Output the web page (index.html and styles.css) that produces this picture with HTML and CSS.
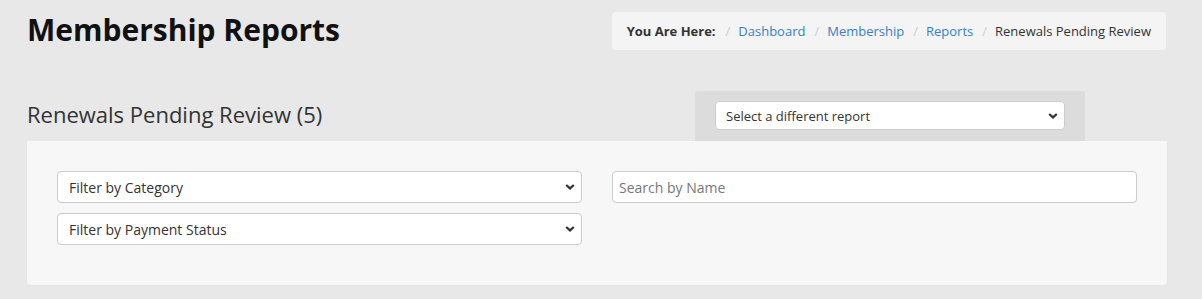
FILE: index.html
```html
<!DOCTYPE html>
<html lang="en">
<head>
    <meta charset="UTF-8">
    <meta name="viewport" content="width=device-width, initial-scale=1.0">
    <title>Membership Reports</title>
    <link rel="stylesheet" href="styles.css">
</head>
<body>
    <div class="page">
        <div class="page-header">
            <h1>Membership Reports</h1>
            <ol class="breadcrumb">
                <li class="here">You Are Here:</li>
                <li><a href="#">Dashboard</a></li>
                <li><a href="#">Membership</a></li>
                <li><a href="#">Reports</a></li>
                <li class="active">Renewals Pending Review</li>
            </ol>
        </div>
        <div class="report-head">
            <h2>Renewals Pending Review (5)</h2>
            <div class="report-switch">
                <div class="select-wrap">
                    <select class="report-select">
                        <option>Select a different report</option>
                    </select>
                    <svg class="chevron" viewBox="0 0 10 6" width="10" height="6"><path d="M1.2 1l3.8 3.4L8.8 1" fill="none" stroke="#333" stroke-width="2.2"/></svg>
                </div>
            </div>
        </div>
        <div class="panel">
            <div class="col">
                <div class="select-wrap">
                    <select class="field">
                        <option>Filter by Category</option>
                    </select>
                    <svg class="chevron" viewBox="0 0 10 6" width="10" height="6"><path d="M1.2 1l3.8 3.4L8.8 1" fill="none" stroke="#333" stroke-width="2.2"/></svg>
                </div>
                <div class="select-wrap">
                    <select class="field">
                        <option>Filter by Payment Status</option>
                    </select>
                    <svg class="chevron" viewBox="0 0 10 6" width="10" height="6"><path d="M1.2 1l3.8 3.4L8.8 1" fill="none" stroke="#333" stroke-width="2.2"/></svg>
                </div>
            </div>
            <div class="col">
                <input class="field search" type="text" placeholder="Search by Name">
            </div>
        </div>
    </div>
</body>
</html>
```

FILE: styles.css
```css
body {
    margin: 0;
    font-family: 'Open Sans', 'Liberation Sans', sans-serif;
    color: #333;
    background-color: #e8e8e8;
}
.page {
    width: 1140px;
    margin-left: 27px;
}
.page-header {
    display: flex;
    justify-content: space-between;
    align-items: flex-start;
    padding-top: 12px;
}
h1 {
    margin: 0;
    font-size: 30px;
    font-weight: 700;
    color: #111;
    line-height: 36px;
}
.breadcrumb {
    list-style: none;
    margin: 0 1px 0 0;
    padding: 0 15px;
    height: 38px;
    display: flex;
    align-items: center;
    background-color: #f4f4f4;
    border-radius: 4px;
    font-size: 13px;
}
.breadcrumb li + li::before {
    content: "/";
    color: #ccc;
    padding: 0 8px 0 9px;
}
.breadcrumb .here {
    font-weight: 700;
    margin-right: 1px;
}
.breadcrumb a {
    color: #3a7fc4;
    text-decoration: none;
}
.breadcrumb .active {
    color: #333;
}
.report-head {
    display: flex;
    align-items: flex-end;
    justify-content: space-between;
    margin-top: 41px;
}
h2 {
    margin: 0 0 12px 0;
    font-size: 22px;
    font-weight: 400;
    color: #333;
    line-height: 30px;
}
.report-switch {
    width: 350px;
    margin-right: 82px;
    padding: 10px 20px 11px;
    background-color: #dcdcdc;
    border-radius: 3px 3px 0 0;
}
.select-wrap {
    position: relative;
}
.chevron {
    position: absolute;
    right: 7px;
    top: 50%;
    margin-top: -3px;
    pointer-events: none;
}
select, input {
    font-family: inherit;
    box-sizing: border-box;
    width: 100%;
    background-color: #fff;
    border: 1px solid #ccc;
    border-radius: 4px;
    color: #333;
    appearance: none;
    outline: none;
}
.report-select {
    height: 29px;
    padding: 0 10px;
    font-size: 13px;
}
.panel {
    display: flex;
    gap: 30px;
    padding: 30px;
    background-color: #f7f7f7;
    border-radius: 0 0 4px 4px;
    box-shadow: 0 1px 2px rgba(0, 0, 0, 0.06);
}
.col {
    flex: 1;
    display: flex;
    flex-direction: column;
    gap: 10px;
}
.col .select-wrap:last-child {
    margin-bottom: 10px;
}
.field {
    height: 32px;
    padding: 0 11px;
    font-size: 14px;
}
.search {
    padding: 0 6px;
}
.search::placeholder {
    color: #777;
}
```
